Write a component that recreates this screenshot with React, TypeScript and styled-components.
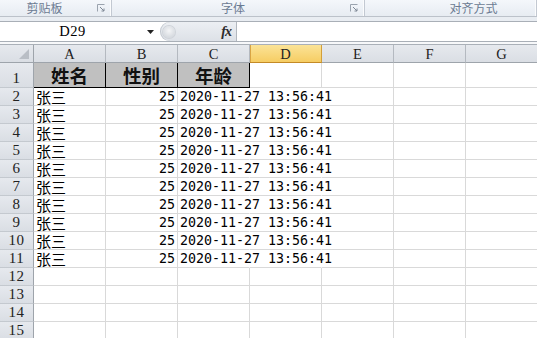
import React from 'react';
import styled, { createGlobalStyle, css } from 'styled-components';

const GlobalStyle = createGlobalStyle`
  html, body {
    margin: 0;
    padding: 0;
    background: #fff;
    overflow: hidden;
  }
  body {
    font-family: "Noto Sans CJK SC", sans-serif;
  }
`;

const Window = styled.div`
  width: 537px;
  height: 338px;
  overflow: hidden;
  background: #fff;
`;

/* ribbon group captions */
const Ribbon = styled.div`
  display: flex;
  height: 17px;
  box-sizing: border-box;
  background: linear-gradient(#f4f7fb, #e7ecf2);
  border-bottom: 1px solid #bcc2ca;
`;

const Group = styled.div<{ $width?: number; $padLeft?: number; $padRight?: number }>`
  position: relative;
  flex: ${({ $width }) => ($width ? `0 0 ${$width}px` : '1 1 auto')};
  box-sizing: border-box;
  display: flex;
  align-items: center;
  justify-content: center;
  padding-left: ${({ $padLeft }) => $padLeft || 0}px;
  padding-right: ${({ $padRight }) => $padRight || 0}px;
  font-size: 12px;
  line-height: 16px;
  color: #6b7b92;
  border-right: 1px solid #c3c9d2;
  box-shadow: inset -1px 0 #fbfcfd;
`;

const Launcher = styled.svg`
  position: absolute;
  top: 4px;
  right: 6px;
`;

/* formula bar */
const FormulaArea = styled.div`
  height: 28px;
  box-sizing: border-box;
  padding-top: 4px;
  background: #e9edf2;
  border-bottom: 1px solid #aab0b8;
`;

const FormulaBar = styled.div`
  display: flex;
  height: 21px;
  box-sizing: border-box;
  background: #fff;
  border-top: 1px solid #a9afb7;
  border-bottom: 1px solid #a9afb7;
  box-shadow: 0 2px 0 #f7f8fa;
`;

const NameBox = styled.div`
  flex: 0 0 160px;
  display: flex;
  align-items: center;
  box-sizing: border-box;
  padding-right: 6px;
`;

const NameText = styled.span`
  flex: 1;
  text-align: center;
  font-family: "Liberation Serif", serif;
  font-size: 14.5px;
  letter-spacing: 0.5px;
  color: #000;
  padding-right: 2px;
`;

const FxBox = styled.div`
  flex: 0 0 77px;
  display: flex;
  align-items: center;
  box-sizing: border-box;
  padding-left: 3px;
  padding-right: 5px;
  border-radius: 10px 0 0 10px;
  background: linear-gradient(#eceff3, #dde1e7);
  border-right: 1px solid #b3b8bf;
  box-shadow: inset 1px 0 #c3c8cf;
`;

const Knob = styled.div`
  width: 12px;
  height: 12px;
  border-radius: 50%;
  background: radial-gradient(circle at 50% 40%, #f4f5f7 0%, #d7dbe0 70%, #c4c9d0 100%);
  box-shadow: 0 0 0 1px #cfd3d9;
`;

const Fx = styled.span`
  margin-left: auto;
  font-family: "Liberation Serif", serif;
  font-style: italic;
  font-weight: bold;
  font-size: 14px;
  color: #2b2b2b;
  letter-spacing: -1px;
`;

const FormulaInput = styled.div`
  flex: 1;
  background: #fff;
`;

/* sheet */
const Sheet = styled.div`
  display: grid;
  grid-template-columns: 34px repeat(7, 72px);
  grid-template-rows: 18px 25px repeat(14, 18px);
`;

const headerBg = css`
  background: linear-gradient(#e6e9ee, #dadee4);
`;

const Corner = styled.div`
  ${headerBg};
  position: relative;
  box-sizing: border-box;
  border-right: 1px solid #9ea4ab;
  border-bottom: 1px solid #9ea4ab;
`;

const CornerMark = styled.svg`
  position: absolute;
  right: 4px;
  bottom: 3px;
`;

const ColHead = styled.div<{ $active?: boolean }>`
  ${headerBg};
  box-sizing: border-box;
  display: flex;
  align-items: center;
  justify-content: center;
  font-family: "Liberation Serif", serif;
  font-size: 14.5px;
  line-height: 16px;
  color: #222;
  border-right: 1px solid #b4b9c0;
  border-bottom: 1px solid #9ea4ab;
  ${({ $active }) =>
    $active &&
    css`
      background: linear-gradient(#fbe397, #f6cd63);
      border-right: 1px solid #d39f3a;
      border-bottom: 1px solid #c48a26;
      box-shadow: inset 1px 0 #d9a544;
    `}
`;

const RowHead = styled.div`
  ${headerBg};
  box-sizing: border-box;
  display: flex;
  align-items: flex-end;
  justify-content: center;
  font-family: "Liberation Serif", serif;
  font-size: 15px;
  line-height: 17px;
  letter-spacing: 0.5px;
  color: #222;
  border-right: 1px solid #9ea4ab;
  border-bottom: 1px solid #c4c9cf;
`;

const Cell = styled.div<{ $align?: 'left' | 'right' | 'center'; $noRight?: boolean }>`
  box-sizing: border-box;
  display: flex;
  align-items: flex-end;
  justify-content: ${({ $align }) =>
    $align === 'right' ? 'flex-end' : $align === 'center' ? 'center' : 'flex-start'};
  padding: 0 2px;
  white-space: nowrap;
  overflow: visible;
  border-right: 1px solid ${({ $noRight }) => ($noRight ? 'transparent' : '#d9d9d9')};
  border-bottom: 1px solid #d9d9d9;
`;

const TitleCell = styled(Cell)`
  background: #c0c0c0;
  align-items: center;
  border-right: 1px solid #000;
  border-bottom: 1px solid #000;
  font-family: "Noto Sans CJK SC", sans-serif;
  font-weight: 700;
  font-size: 18.5px;
  line-height: 24px;
  color: #111;
`;

const Name = styled.div`
  height: 16px;
  font-family: "Noto Sans CJK SC", sans-serif;
  font-size: 15px;
  line-height: 16px;
  color: #000;
`;

const Num = styled.div`
  position: relative;
  z-index: 1;
  height: 16px;
  font-family: "DejaVu Sans Mono", monospace;
  font-size: 13.3px;
  line-height: 16px;
  color: #000;
`;

const columns = ['A', 'B', 'C', 'D', 'E', 'F', 'G'];
const titles = ['姓名', '性别', '年龄'];

type Person = { name: string; age: number; time: string };

const people: Person[] = Array.from({ length: 10 }, () => ({
  name: '张三',
  age: 25,
  time: '2020-11-27 13:56:41',
}));

const LauncherIcon = () => (
  <Launcher width='8' height='8' viewBox='0 0 8 8'>
    <path d='M0.5 7.5V0.5H7.5' fill='none' stroke='#9aa3ae' strokeWidth='1' />
    <path d='M3 3L7 7M7 4.5V7H4.5' fill='none' stroke='#7e8895' strokeWidth='1' />
  </Launcher>
);

const App: React.FC = (): JSX.Element => {
  return (
    <Window>
      <GlobalStyle />
      <Ribbon>
        <Group $width={112} $padRight={22}>
          剪贴板
          <LauncherIcon />
        </Group>
        <Group $width={253} $padRight={10}>
          字体
          <LauncherIcon />
        </Group>
        <Group $padLeft={46}>对齐方式</Group>
      </Ribbon>

      <FormulaArea>
        <FormulaBar>
          <NameBox>
            <NameText>D29</NameText>
            <svg width='7' height='4' viewBox='0 0 7 4'>
              <path d='M0 0H7L3.5 4Z' fill='#222' />
            </svg>
          </NameBox>
          <FxBox>
            <Knob />
            <Fx>fx</Fx>
          </FxBox>
          <FormulaInput />
        </FormulaBar>
      </FormulaArea>

      <Sheet>
        <Corner>
          <CornerMark width='10' height='10' viewBox='0 0 10 10'>
            <path d='M10 0V10H0Z' fill='#b9bec5' />
          </CornerMark>
        </Corner>
        {columns.map((c) => (
          <ColHead key={c} $active={c === 'D'}>
            {c}
          </ColHead>
        ))}

        <RowHead>1</RowHead>
        {titles.map((t) => (
          <TitleCell key={t} $align='center'>
            {t}
          </TitleCell>
        ))}
        {columns.slice(3).map((c) => (
          <Cell key={c} />
        ))}

        {people.map((p, i) => (
          <React.Fragment key={i}>
            <RowHead>{i + 2}</RowHead>
            <Cell>
              <Name>{p.name}</Name>
            </Cell>
            <Cell $align='right'>
              <Num>{p.age}</Num>
            </Cell>
            <Cell $noRight>
              <Num>{p.time}</Num>
            </Cell>
            <Cell $noRight />
            <Cell />
            <Cell />
            <Cell />
          </React.Fragment>
        ))}

        {[12, 13, 14, 15].map((r) => (
          <React.Fragment key={r}>
            <RowHead>{r}</RowHead>
            {columns.map((c) => (
              <Cell key={c} />
            ))}
          </React.Fragment>
        ))}
      </Sheet>
    </Window>
  );
};

export default App;
